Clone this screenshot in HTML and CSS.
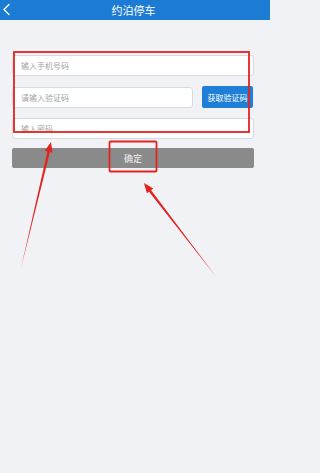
FILE: index.html
```html
<!DOCTYPE html>
<html lang="zh">
<head>
<meta charset="utf-8">
<title>约泊停车</title>
<link rel="stylesheet" href="styles.css">
</head>
<body>
<div class="page">
  <header class="topbar">
    <span class="back">
      <svg width="10" height="20" viewBox="0 0 10 20"><path d="M9 4.5 L4 9.5 L9 14.5" fill="none" stroke="#ffffff" stroke-width="1.3" stroke-linecap="round" stroke-linejoin="round"/></svg>
    </span>
    <h1 class="title">约泊停车</h1>
  </header>
  <form class="form">
    <input class="field" type="text" placeholder="输入手机号码">
    <div class="code-row">
      <input class="field code" type="text" placeholder="请输入验证码">
      <button class="get-code" type="button">获取验证码</button>
    </div>
    <input class="field" type="password" placeholder="输入密码">
    <button class="confirm" type="button">确定</button>
  </form>
  <svg class="marks" width="270" height="473" viewBox="0 0 270 473">
    <rect x="14" y="52" width="235" height="80" fill="none" stroke="#e3231f" stroke-width="1.8"/>
    <rect x="109.5" y="141.5" width="47" height="30" rx="1" fill="none" stroke="#e3231f" stroke-width="1.8"/>
    <polygon fill="#e3231f" points="21,268 47.42,151.43 44.79,150.80 51,142 52.57,152.66 49.95,152.03"/>
    <polygon fill="#e3231f" points="217,278 149.06,191.72 146.92,193.37 144,183 153.26,188.49 151.12,190.14"/>
  </svg>
</div>
</body>
</html>
```
FILE: styles.css
```css
* { box-sizing: border-box; }
html, body { margin: 0; padding: 0; }
body {
  background: #f1f2f6;
  font-family: "Noto Sans CJK SC", "Noto Sans", sans-serif;
}
.page {
  position: relative;
  width: 270px;
  height: 473px;
  overflow: hidden;
}
.topbar {
  height: 20px;
  background: #1c7cd4;
  display: flex;
  align-items: center;
  justify-content: center;
  position: relative;
}
.back {
  position: absolute;
  left: 0;
  top: 0;
  height: 20px;
  display: flex;
  align-items: center;
}
.title {
  margin: 0;
  color: #ffffff;
  font-size: 11px;
  font-weight: normal;
  line-height: 20px;
  margin-left: -3px;
}
.form {
  padding: 35px 16px 0 12px;
  display: flex;
  flex-direction: column;
  gap: 10px;
}
.field {
  height: 21px;
  width: 100%;
  border: 1px solid #d6d9df;
  border-radius: 3px;
  background: #ffffff;
  padding: 0 8px;
  font-family: "Noto Sans CJK SC", sans-serif;
  font-size: 8px;
  color: #333;
  outline: none;
}
.field::placeholder { color: #a3a3a3; }
.code-row {
  display: flex;
  align-items: center;
  gap: 9px;
  padding-right: 1px;
}
.field.code { flex: 1; width: auto; }
.get-code {
  width: 51px;
  height: 22px;
  border: none;
  border-radius: 2px;
  background: #1f7fd6;
  color: #ffffff;
  font-family: "Noto Sans CJK SC", sans-serif;
  font-size: 8px;
  padding: 0;
}
.confirm {
  height: 20px;
  width: 100%;
  border: none;
  border-radius: 2px;
  background: #8a8a8a;
  color: #f2f2f2;
  font-family: "Noto Sans CJK SC", sans-serif;
  font-size: 9px;
  padding: 0;
  margin-top: -1px;
}
.marks {
  position: absolute;
  left: 0;
  top: 0;
  pointer-events: none;
}
```
